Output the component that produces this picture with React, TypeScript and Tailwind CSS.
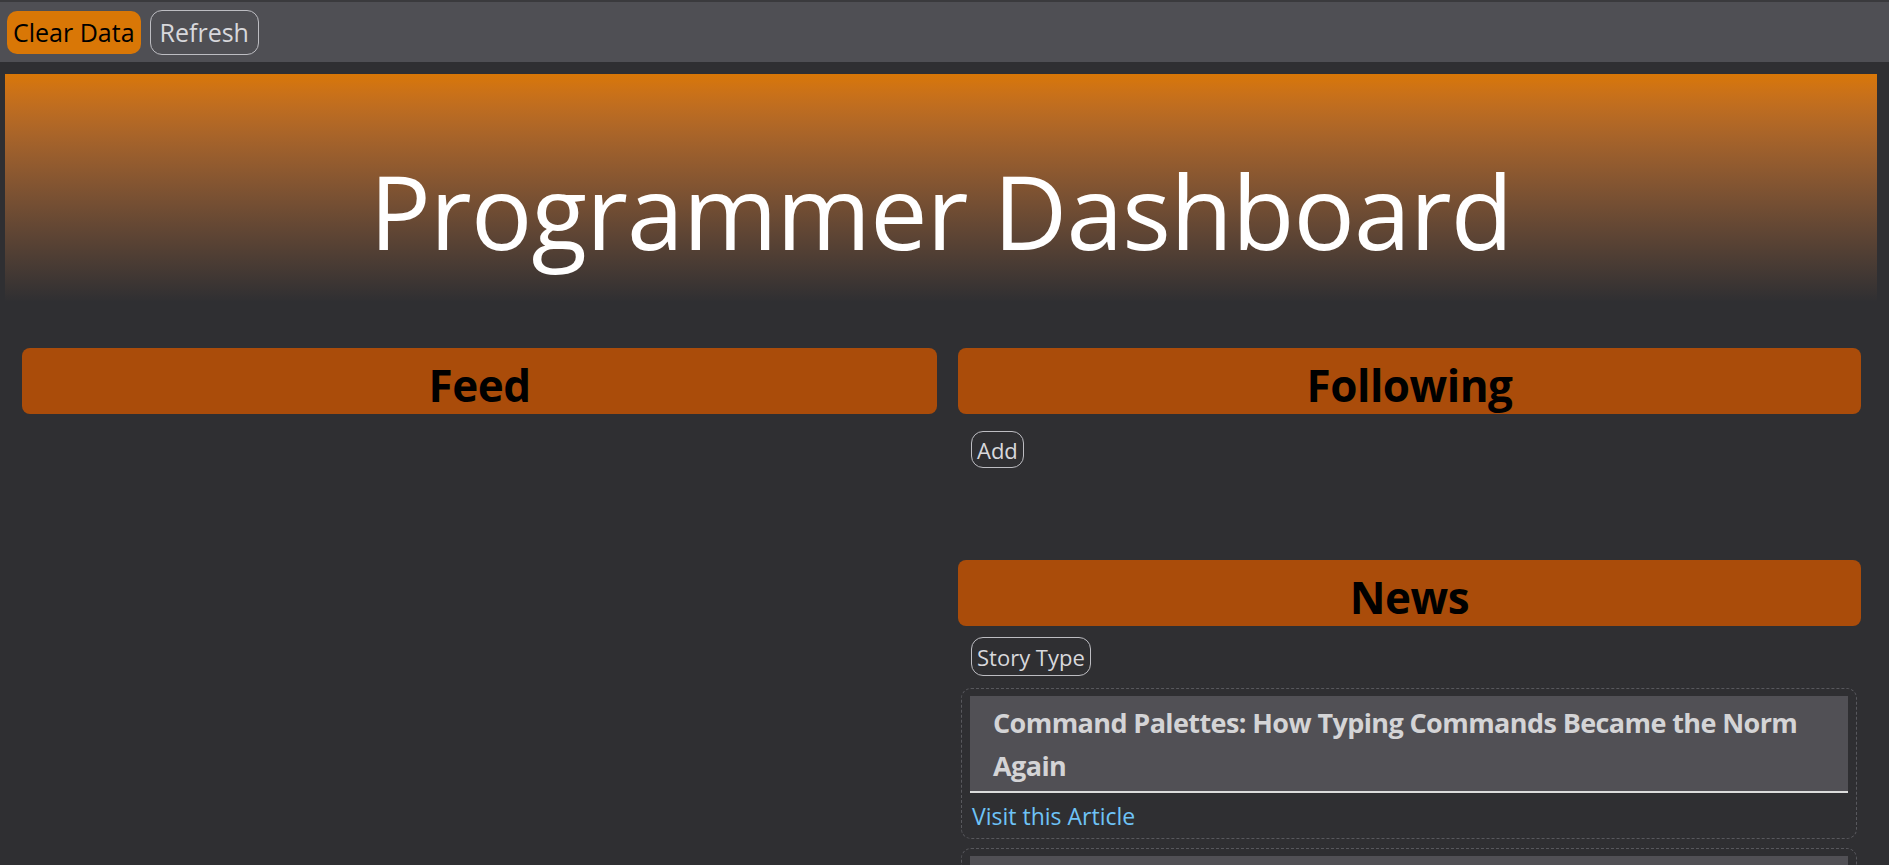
import { useState } from 'react';

interface Story {
  id: number;
  title: string;
  url: string;
}

const stories: Story[] = [
  { id: 1, title: 'Command Palettes: How Typing Commands Became the Norm Again', url: '#' },
  { id: 2, title: 'Show HN: A tiny terminal dashboard for your side projects', url: '#' },
];

export default function App() {
  const [following] = useState<string[]>([]);

  return (
    <main className="min-h-screen bg-[#2f2f32] font-['Open_Sans','Noto_Sans',sans-serif]">
      {/* toolbar */}
      <div className="h-[62px] bg-[#4f4f54] border-t-2 border-[#3a3a3d] flex items-center gap-[9px] pl-[7px]">
        <button className="h-[43px] px-[6px] rounded-[10px] bg-[#d97706] text-black text-[25px] leading-none">
          Clear Data
        </button>
        <button className="h-[45px] px-[9px] rounded-[12px] border border-[#bdbdc2] text-[#d8d8dc] text-[25px] leading-none">
          Refresh
        </button>
      </div>

      {/* hero */}
      <div className="mt-[12px] ml-[5px] mr-[12px] h-[228px] pt-[66px] bg-gradient-to-b from-[#d97706] to-[#2f2f32] overflow-hidden">
        <h1 className="text-center text-white text-[102px] leading-[142px] tracking-[-0.8px]">
          Programmer Dashboard
        </h1>
      </div>

      {/* columns */}
      <div className="flex gap-[21px] pl-[22px] mt-[46px]">
        <section className="w-[915px]">
          <h2 className="h-[66px] overflow-hidden pt-[4px] rounded-[8px] bg-[#aa4c0a] text-black text-[44px] font-bold leading-[66px] text-center tracking-[-0.5px]">
            Feed
          </h2>
        </section>

        <section className="w-[903px]">
          <h2 className="h-[66px] overflow-hidden pt-[4px] rounded-[8px] bg-[#aa4c0a] text-black text-[44px] font-bold leading-[66px] text-center tracking-[-0.5px]">
            Following
          </h2>
          <div className="pl-[13px] mt-[17px]">
            <button className="h-[37px] px-[5px] rounded-[12px] border border-[#bdbdc2] text-[#d8d8dc] text-[22px] leading-none">
              Add
            </button>
          </div>
          <ul className="h-[92px]">
            {following.map((name) => (
              <li key={name} className="text-[#d8d8dc]">{name}</li>
            ))}
          </ul>

          <h2 className="h-[66px] overflow-hidden pt-[4px] rounded-[8px] bg-[#aa4c0a] text-black text-[44px] font-bold leading-[66px] text-center tracking-[-0.5px]">
            News
          </h2>
          <div className="pl-[13px] mt-[11px]">
            <button className="h-[39px] px-[5px] rounded-[12px] border border-[#bdbdc2] text-[#d8d8dc] text-[22px] leading-none">
              Story Type
            </button>
          </div>

          <div className="mt-[12px] ml-[3px] mr-[4px] flex flex-col gap-[9px]">
            {stories.map((story) => (
              <article
                key={story.id}
                className="border border-dashed border-[#58585d] rounded-[10px] pt-[7px] px-[8px] pb-[2px]"
              >
                <h3 className="bg-[#515055] border-b-2 border-[#dcdcdc] pl-[23px] pr-[8px] pt-[5px] pb-[4px] text-[#d4d4d6] text-[27px] leading-[43px] font-bold tracking-[-0.6px]">
                  {story.title}
                </h3>
                <a href={story.url} className="block pl-[2px] pt-[3px] text-[#6ec3f7] text-[23px] leading-[40px]">
                  Visit this Article
                </a>
              </article>
            ))}
          </div>
        </section>
      </div>
    </main>
  );
}
